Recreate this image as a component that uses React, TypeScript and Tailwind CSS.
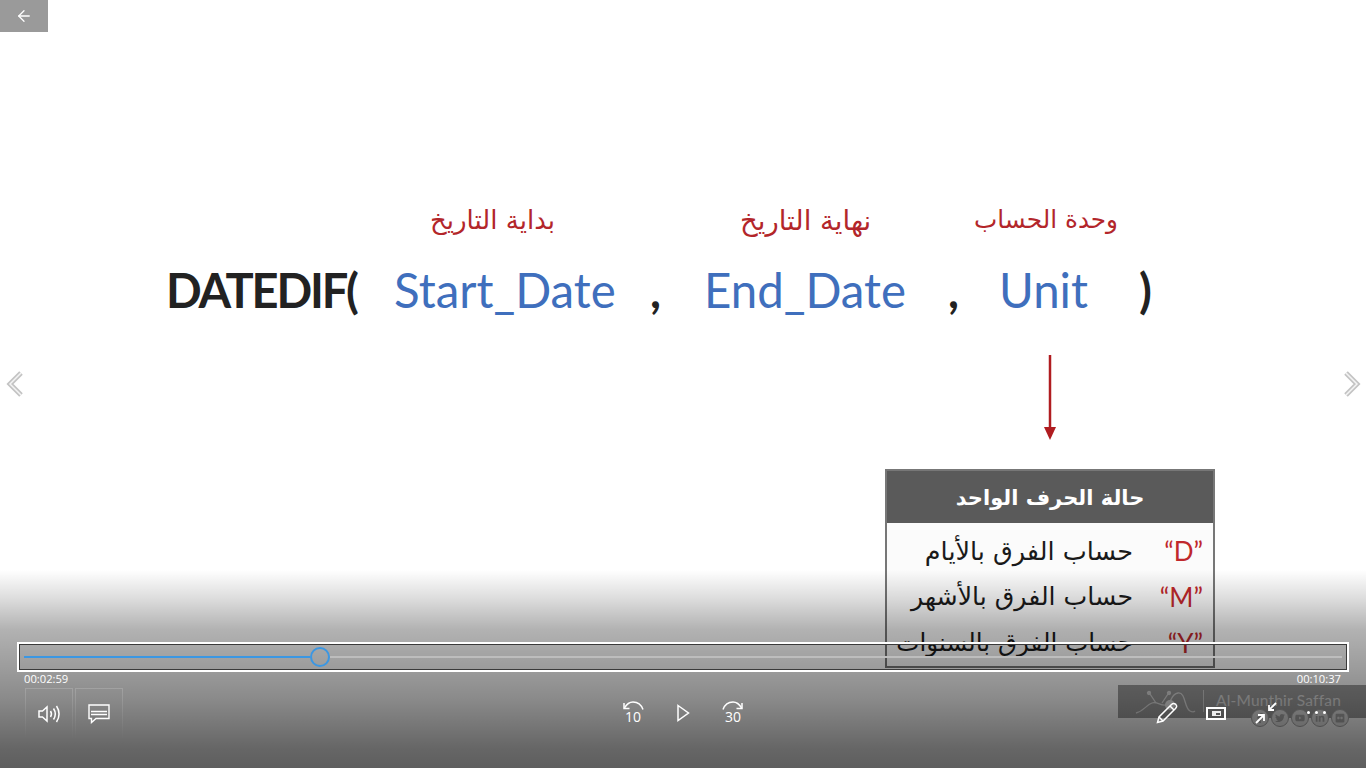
import { ArrowLeft } from 'lucide-react';
import { FaFacebookF, FaFlickr, FaLinkedinIn, FaTwitter, FaYoutube } from 'react-icons/fa';

const arabic = 'font-["DejaVu_Sans","Noto_Sans",sans-serif]';
const blue = 'absolute top-[260px] text-[#3f6fbd] text-[47.4px] leading-[60px] font-["Lato",sans-serif] whitespace-nowrap';
const black = 'absolute top-[260px] text-[#222222] text-[47px] leading-[60px] font-bold font-["Lato",sans-serif] whitespace-nowrap';
const redLabel = `absolute top-[204px] text-[#b3262a] leading-[32px] whitespace-nowrap ${arabic}`;
const fadedBox = 'w-[48px] h-[50px] border border-b-0 border-transparent [border-image:linear-gradient(to_bottom,rgba(255,255,255,0.16),rgba(255,255,255,0))_1] flex items-center justify-center';

const rows = [
  { key: '“D”', text: 'حساب الفرق بالأيام', size: 'text-[25.5px]' },
  { key: '“M”', text: 'حساب الفرق بالأشهر', size: 'text-[25.2px]' },
  { key: '“Y”', text: 'حساب الفرق بالسنوات', size: 'text-[24.6px]' },
];

const socials = [FaFacebookF, FaTwitter, FaYoutube, FaLinkedinIn, FaFlickr];

const NavChevron = ({ flip }: { flip?: boolean }) => (
  <svg width="18" height="28" viewBox="0 0 18 28" className={flip ? 'rotate-180' : ''}>
    <path d="M15 3 L4 14 L15 25" fill="none" stroke="#c4c4c4" strokeWidth="5" />
    <path d="M15 3 L4 14 L15 25" fill="none" stroke="#f4f4f4" strokeWidth="1.5" />
  </svg>
);

const VolumeIcon = () => (
  <svg width="22" height="18" viewBox="0 0 22 18" fill="none" stroke="#fff" strokeWidth="1.5">
    <path d="M1 6 H4.5 L9 2 V16 L4.5 12 H1 Z" />
    <path d="M12.5 6 C13.8 8 13.8 10 12.5 12" />
    <path d="M15.5 3.5 C17.8 7 17.8 11 15.5 14.5" />
    <path d="M18.5 1 C21.7 6 21.7 12 18.5 17" />
  </svg>
);

const CaptionsIcon = () => (
  <svg width="22" height="20" viewBox="0 0 22 20" fill="none" stroke="#fff" strokeWidth="1.4">
    <path d="M1 1 H21 V14.5 H8 L3.5 18.5 V14.5 H1 Z" />
    <path d="M3 7.5 H19 M3 10.5 H19" />
  </svg>
);

const SkipIcon = ({ label, flip }: { label: string; flip?: boolean }) => (
  <div className="relative w-[24px] h-[24px]">
    <svg width="24" height="14" viewBox="0 0 24 14" fill="none" stroke="#fff" strokeWidth="1.5" className={`absolute top-0 left-0 ${flip ? '-scale-x-100' : ''}`}>
      <path d="M3.5 7 C6 2.5 9 1 12 1 C16 1 20 3 22 8.5" />
      <path d="M3 2 V7.5 H8.5" />
    </svg>
    <span className={`absolute left-0 right-0 top-[8px] text-center text-white text-[14px] leading-[16px] font-["Open_Sans",sans-serif]`}>{label}</span>
  </div>
);

const PlayIcon = () => (
  <svg width="14" height="18" viewBox="0 0 14 18" fill="none" stroke="#fff" strokeWidth="1.5">
    <path d="M2 1.5 L12.5 9 L2 16.5 Z" />
  </svg>
);

const PenIcon = () => (
  <svg width="22" height="22" viewBox="0 0 22 22" fill="none" stroke="#fff" strokeWidth="1.5">
    <path d="M1.5 20.5 L3 15 L15.5 2.5 C16.8 1.2 18.5 1.2 19.8 2.4 C21 3.7 20.8 5.2 19.5 6.5 L7 19 Z" />
    <path d="M3 15 L7 19 M14 4 L18 8" />
  </svg>
);

const MiniViewIcon = () => (
  <div className="w-[20px] h-[13px] border-2 border-white flex items-center justify-center">
    <div className="w-[9px] h-[5px] bg-[#ececec] flex items-end justify-end p-px">
      <div className="w-[4px] h-[2px] bg-[#555555]" />
    </div>
  </div>
);

const CollapseIcon = () => (
  <svg width="24" height="22" viewBox="0 0 24 22" fill="none" stroke="#fff" strokeWidth="1.8">
    <path d="M22 1 L15 8 M15 3 V8 H20" />
    <path d="M2 21 L10 13 M4 13 H10 V19" />
  </svg>
);

const Watermark = () => (
  <div className="absolute left-[1118px] top-[685px] w-[248px] h-[33px] bg-[#a0a0a0] flex items-center pl-[98px] pb-[3px]">
    <svg width="62" height="30" viewBox="0 0 62 30" fill="none" stroke="#e0e0e0" strokeWidth="1.3" className="absolute left-[16px] top-[1px]">
      <path d="M2 27 C10 25 12 19 18 17 C24 15 28 22 34 18 C38 15 37 8 44 7 C52 6 50 22 56 25 C58 26 60 26 61 25" />
      <path d="M16 8 L22 17 M34 8 L28 17" />
      <circle cx="15" cy="7" r="1.5" fill="#e0e0e0" />
      <circle cx="35" cy="7" r="1.5" fill="#e0e0e0" />
      <circle cx="36" cy="19" r="5" fill="#eeeeee" stroke="none" />
    </svg>
    <div className="absolute left-[85px] top-[5px] w-px h-[22px] bg-[#d4d4d4]" />
    <span className={`text-[#e2e2e2] text-[15.5px] leading-[20px] font-["Lato",sans-serif] tracking-[0.2px]`}>Al-Munthir Saffan</span>
    <div className="absolute left-[133px] top-[24px] flex gap-[2px]">
      {socials.map((Icon, i) => (
        <div key={i} className="w-[18px] h-[18px] rounded-full bg-[#e6e6e6] border border-[#a8a8a8] flex items-center justify-center">
          <Icon size={10} color="#aaaaaa" />
        </div>
      ))}
    </div>
  </div>
);

export default function App() {
  return (
    <div className="relative w-[1366px] h-[768px] bg-white overflow-hidden">
      {/* slide frame */}
      <span dir="rtl" className={`${redLabel} text-[26px] left-[430px]`}>بداية التاريخ</span>
      <span dir="rtl" className={`${redLabel} text-[27.5px] left-[740px]`}>نهاية التاريخ</span>
      <span dir="rtl" className={`${redLabel} text-[24.7px] left-[974px]`}>وحدة الحساب</span>

      <span className={`${black} left-[166px] tracking-[-2.2px]`}>DATEDIF(</span>
      <span className={`${blue} left-[394px]`}>Start_Date</span>
      <span className={`${black} left-[650px]`}>,</span>
      <span className={`${blue} left-[704px]`}>End_Date</span>
      <span className={`${black} left-[948px]`}>,</span>
      <span className={`${blue} left-[999px]`}>Unit</span>
      <span className={`${black} left-[1139px]`}>)</span>

      <svg width="14" height="86" viewBox="0 0 14 86" className="absolute left-[1043px] top-[355px]">
        <path d="M7 0 V74" stroke="#b01c20" strokeWidth="2.5" />
        <path d="M1 72 H13 L7 85 Z" fill="#b01c20" />
      </svg>

      <div className="absolute left-[885px] top-[469px] w-[330px] h-[199px] border-2 border-[#777777] bg-[#fbfbfb]">
        <div dir="rtl" className={`h-[52px] pt-[3px] bg-[#5a5a5a] flex items-center justify-center text-white text-[21px] font-bold ${arabic}`}>
          حالة الحرف الواحد
        </div>
        <div className="flex flex-col pt-[5px]">
          {rows.map((r) => (
            <div key={r.key} className="h-[46px] flex items-center justify-end pr-[10px]">
              <span dir="rtl" className={`text-[#1a1a1a] whitespace-nowrap ${r.size} ${arabic}`}>{r.text}</span>
              <span className={`w-[70px] text-right text-[#c0282c] text-[26px] font-["Lato",sans-serif]`}>{r.key}</span>
            </div>
          ))}
        </div>
      </div>

      <Watermark />

      {/* player chrome */}
      <div className="absolute inset-x-0 bottom-0 h-[198px] bg-[linear-gradient(to_bottom,rgba(0,0,0,0)_0%,rgba(0,0,0,0.14)_15%,rgba(0,0,0,0.3)_30%,rgba(0,0,0,0.46)_65%,rgba(0,0,0,0.6)_90%,rgba(0,0,0,0.63)_100%)]">
        <div className="mt-[72px] mx-[17px] h-[30px] border-2 border-white">
          <div className="h-full border border-[#3a3a3a] flex items-center px-[4px]">
            <div className="h-[2px] w-[286px] bg-[#3b97e3]" />
            <div className="w-[20px] h-[20px] rounded-full border-2 border-[#3b97e3] shrink-0" />
            <div className="h-[2px] flex-1 bg-[#bdbdbd]" />
          </div>
        </div>
        <div className={`mx-[24px] mt-[-1px] flex justify-between text-white text-[11.2px] leading-[16px] font-["Open_Sans",sans-serif]`}>
          <span>00:02:59</span>
          <span className="mr-[1px]">00:10:37</span>
        </div>
        <div className="relative mx-[25px] mt-[1px] h-[50px] flex items-center justify-between">
          <div className="flex gap-[2px]">
            <div className={fadedBox}>
              <VolumeIcon />
            </div>
            <div className={fadedBox}>
              <CaptionsIcon />
            </div>
          </div>
          <div className="flex items-center gap-[31px] absolute left-[596px] top-[13px]">
            <SkipIcon label="10" />
            <PlayIcon />
            <SkipIcon label="30" flip />
          </div>
          <div className="flex items-center gap-[28px] mr-[15px]">
            <PenIcon />
            <MiniViewIcon />
            <CollapseIcon />
            <div className="flex gap-[5px] ml-[1px] -mt-[2px]">
              <div className="w-[3px] h-[3px] rounded-full bg-white" />
              <div className="w-[3px] h-[3px] rounded-full bg-white" />
              <div className="w-[3px] h-[3px] rounded-full bg-white" />
            </div>
          </div>
        </div>
      </div>

      {/* overlay buttons */}
      <button className="absolute left-0 top-0 w-[48px] h-[32px] bg-[#9a9a9a] flex items-center justify-center">
        <ArrowLeft size={18} strokeWidth={1.7} color="#fff" />
      </button>
      <div className="absolute left-[6px] top-[370px]"><NavChevron /></div>
      <div className="absolute left-[1343px] top-[370px]"><NavChevron flip /></div>
    </div>
  );
}
